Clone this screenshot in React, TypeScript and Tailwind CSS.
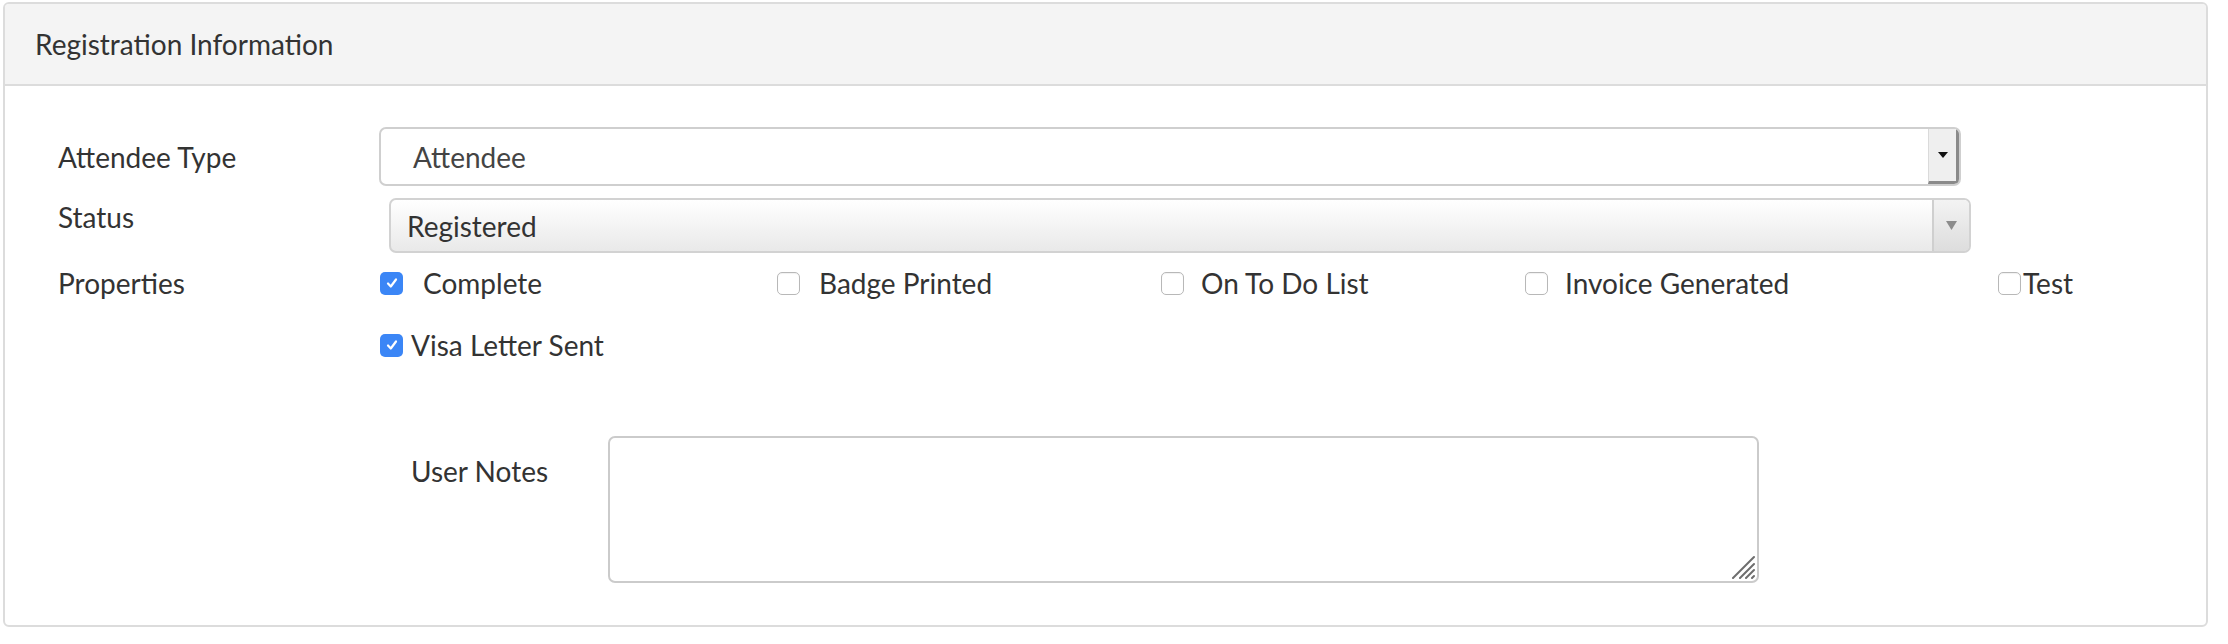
import React from 'react';

// Simple check-box look-alike, checked ones are blue with a white tick
const Box: React.FC<{ checked?: boolean }> = ({ checked }) =>
  checked ? (
    <span className="flex h-[23px] w-[23px] shrink-0 items-center justify-center rounded-[5px] bg-[#3b86f6]">
      <svg width="14" height="14" viewBox="0 0 14 14" fill="none">
        <path d="M3 7.5 L5.8 10.5 L11 3.5" stroke="white" strokeWidth="2.2" strokeLinecap="round" strokeLinejoin="round" />
      </svg>
    </span>
  ) : (
    <span className="h-[23px] w-[23px] shrink-0 rounded-[5px] border-[1.5px] border-[#b8b8b8] bg-white shadow-[inset_0_1px_1px_rgba(0,0,0,0.06)]" />
  );

const props = [
  { label: 'Complete', checked: true, w: 'w-[397px]', gap: 'gap-[20px]' },
  { label: 'Badge Printed', checked: false, w: 'w-[384px]', gap: 'gap-[19px]' },
  { label: 'On To Do List', checked: false, w: 'w-[364px]', gap: 'gap-[17px]' },
  { label: 'Invoice Generated', checked: false, w: 'w-[473px]', gap: 'gap-[17px]' },
  { label: 'Test', checked: false, w: 'w-auto', gap: 'gap-[2px]' },
];

export default function App() {
  return (
    <div className="min-h-[644px] bg-white pl-[3px] pt-[2px] font-[Lato,sans-serif] text-[#333]">
      <div className="w-[2205px] overflow-hidden rounded-[6px] border-2 border-[#dcdcdc]">
        {/* Panel heading */}
        <div className="flex h-[82px] items-center border-b-2 border-[#dcdcdc] bg-[#f4f4f4] pl-[30px] text-[28px]">
          Registration Information
        </div>

        {/* Panel body */}
        <div className="grid grid-cols-[321px_1fr] pl-[53px] pt-[41px] pb-[42px] text-[28px]">
          {/* Attendee type */}
          <div className="flex h-[59px] items-center">Attendee Type</div>
          <div className="flex h-[59px] w-[1582px] overflow-hidden rounded-[7px] border-2 border-[#cfcfcf] bg-white">
            <div className="flex flex-1 items-center pl-[32px] text-[#444]">Attendee</div>
            <div className="flex w-[31px] items-center justify-center border-l border-r-[3px] border-b-[3px] border-l-[#dadada] border-r-[#8a8a8a] border-b-[#8a8a8a] bg-[#efefef]">
              <svg width="10" height="6" viewBox="0 0 10 6">
                <path d="M0 0 H10 L5 6 Z" fill="#111" />
              </svg>
            </div>
          </div>

          {/* Status */}
          <div className="mt-[12px] leading-[38px]">Status</div>
          <div className="mt-[12px] ml-[10px] flex h-[55px] w-[1582px] overflow-hidden rounded-[7px] border-2 border-[#d2d2d2] bg-gradient-to-b from-white to-[#e9e9e9]">
            <div className="flex flex-1 items-center pl-[16px]">Registered</div>
            <div className="flex w-[37px] items-center justify-center border-l-2 border-[#cfcfcf] bg-gradient-to-b from-[#f3f3f3] to-[#dddddd]">
              <svg width="11" height="9" viewBox="0 0 11 9">
                <path d="M0 0 H11 L5.5 9 Z" fill="#8c8c8c" />
              </svg>
            </div>
          </div>

          {/* Properties */}
          <div className="mt-[12px] flex h-[36px] items-center">Properties</div>
          <div className="mt-[12px] flex h-[36px] items-center pl-[1px]">
            {props.map((p) => (
              <label key={p.label} className={`flex items-center ${p.w} ${p.gap}`}>
                <Box checked={p.checked} />
                <span>{p.label}</span>
              </label>
            ))}
          </div>

          <div />
          <div className="mt-[26px] flex h-[36px] items-center gap-[8px] pl-[1px]">
            <Box checked />
            <span>Visa Letter Sent</span>
          </div>

          {/* User notes */}
          <div />
          <div className="mt-[73px] flex pl-[32px]">
            <div className="w-[197px] pt-[14px]">User Notes</div>
            <div className="relative h-[147px] w-[1151px] rounded-[7px] border-2 border-[#cbcbcb] bg-white">
              <svg className="absolute right-[2px] bottom-[2px]" width="24" height="24" viewBox="0 0 24 24">
                <path d="M23 2 L2 23 M23 9 L9 23 M23 15 L15 23 M23 21 L21 23" stroke="#6e6e6e" strokeWidth="2" strokeLinecap="round" />
              </svg>
            </div>
          </div>
        </div>
      </div>
    </div>
  );
}
